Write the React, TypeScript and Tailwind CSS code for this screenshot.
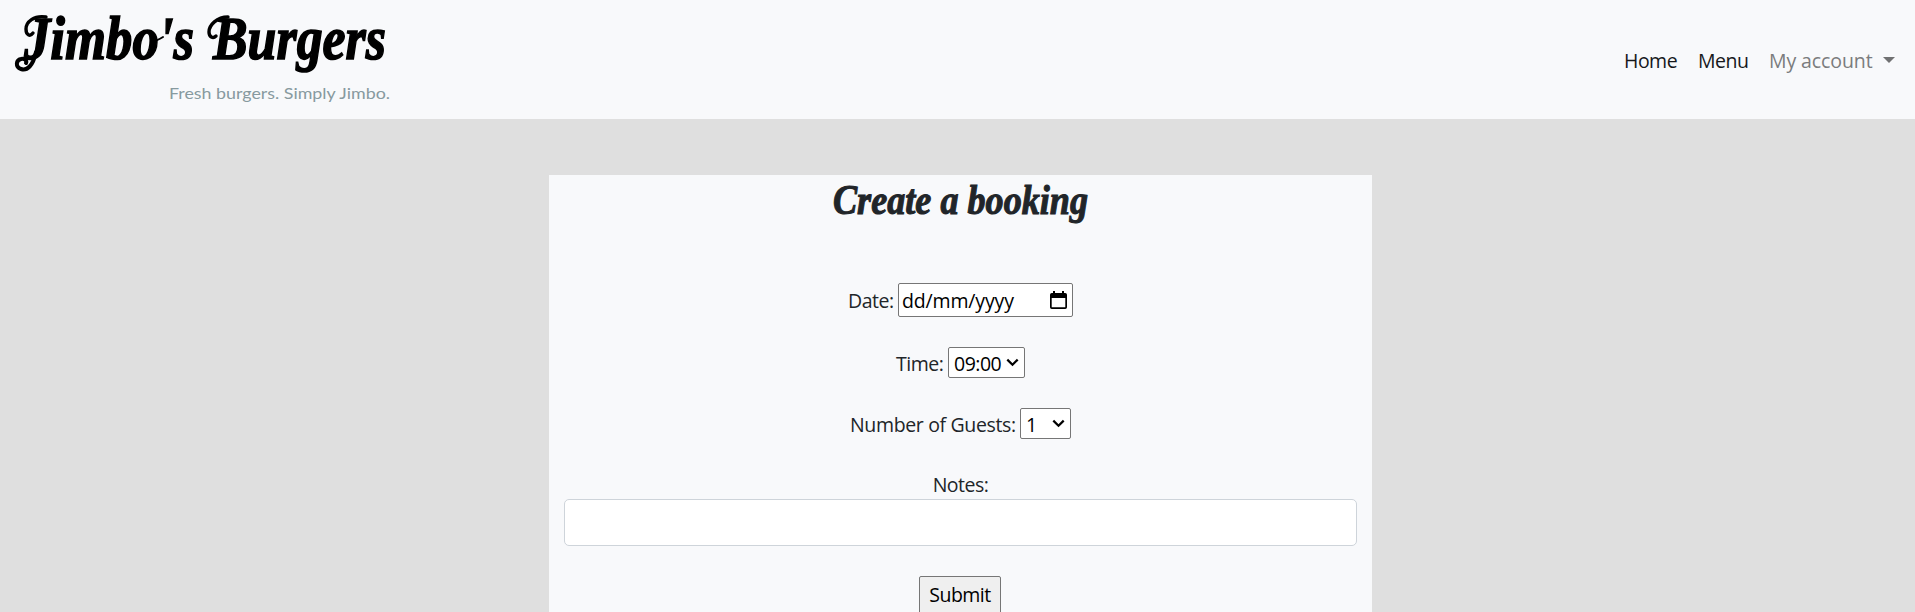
import type { ReactNode } from 'react';

function Chevron() {
  return (
    <svg className="h-[9px] w-[13px] shrink-0" viewBox="0 0 13 9" fill="none" stroke="#000" strokeWidth="2.2">
      <path d="M1.3 1.6 6.5 6.8l5.2-5.2" />
    </svg>
  );
}

function CalendarIcon() {
  return (
    <svg className="h-[18px] w-[17px] shrink-0" viewBox="0 0 17 18">
      <path
        fillRule="evenodd"
        d="M3 0h2v2h7V0h2v2h1.2Q17 2 17 3.8v12.4Q17 18 15.200 18H1.800Q0 18 0 16.200V3.800Q0 2 1.800 2H3zM1.700 7v9.300h13.600V7z"
      />
    </svg>
  );
}

function Row({ label, labelClass, children }: { label: string; labelClass: string; children: ReactNode }) {
  return (
    <div className="flex items-center justify-center">
      <label className={`mr-[4px] h-[30px] whitespace-nowrap pt-px text-left ${labelClass}`}>{label}</label>
      {children}
    </div>
  );
}

function Logo() {
  return (
    <svg className="h-[119px] w-[420px] overflow-visible" viewBox="0 0 420 119" role="img" aria-label="Jimbo's Burgers">
      <g fontSize="62" fontWeight="700" fontStyle="italic" fontFamily="Liberation Serif, serif" stroke="#000" strokeWidth="1.6" letterSpacing="0">
        <text x="24" y="59" textLength="170" lengthAdjust="spacingAndGlyphs">
          Jimbo&apos;s
        </text>
        <text x="213" y="59" textLength="173" lengthAdjust="spacingAndGlyphs">
          Burgers
        </text>
      </g>
      <g fill="none" stroke="#000" strokeWidth="3.4" strokeLinecap="round">
        <path d="M46 17C34 15 26 22 26 29c0 6 4 8 7 4" />
        <path d="M36 52C33 66 27 71 21 69c-6-2-5-9 0-10 4-1 6 2 5 4" strokeWidth="4" />
        <path d="M228 17c-11 0-19 8-19 15 0 5 4 7 7 4" />
        <path d="M151 41c5 0 9-2 12-4" strokeWidth="2" />
      </g>
      <text x="169" y="99" textLength="221" lengthAdjust="spacingAndGlyphs" fontSize="16" fontWeight="400" fontFamily="Lato, sans-serif" letterSpacing="0" fill="#879a9f">
        Fresh burgers. Simply Jimbo.
      </text>
    </svg>
  );
}

export default function App() {
  return (
    <div className="h-[612px] w-[1915px] overflow-hidden bg-[#dfdfdf] font-['Open_Sans','Noto_Sans',sans-serif] text-[19.5px] font-normal leading-[30px] tracking-[-0.5px] text-[#212529]">
      <header className="flex h-[119px] items-center justify-between bg-[#f8f9fb]">
        <Logo />
        <nav className="flex items-center pr-[20px]">
          <a className="mr-[20px] h-[30px] w-[54px] whitespace-nowrap pt-px text-[#16181b]">Home</a>
          <a className="mr-[20px] h-[30px] w-[51px] whitespace-nowrap pt-px text-[#16181b]">Menu</a>
          <a className="h-[30px] w-[105px] whitespace-nowrap pt-px tracking-[-0.1px] text-[#7b7c7d]">My account</a>
          <svg className="ml-[9px] h-[6px] w-[12px]" viewBox="0 0 12 6" fill="#707172">
            <path d="M0 0h12L6 6z" />
          </svg>
        </nav>
      </header>
      <main className="ml-[549px] mt-[56px] flex h-[500px] w-[823px] flex-col bg-[#f8f9fb] px-[15px]">
        <h1 className="flex h-[50px] justify-center">
          <svg className="h-[50px] w-[280px] overflow-visible" viewBox="0 0 280 50" fill="#212529">
            <text x="12" y="39" textLength="255" lengthAdjust="spacingAndGlyphs" fontSize="42" fontWeight="700" fontStyle="italic" letterSpacing="0" fontFamily="Liberation Serif, serif" stroke="#212529" strokeWidth="1.1">
              Create a booking
            </text>
          </svg>
        </h1>
        <form className="mt-[58px] flex flex-col text-center">
          <Row label="Date:" labelClass="w-[46px]">
            <div className="flex h-[34px] w-[175px] items-center justify-between rounded-[2px] border border-[#767676] bg-white pl-[3px] pr-[5px] text-black">
              <span className="h-[30px] pt-px tracking-[-0.15px]">dd/mm/yyyy</span>
              <CalendarIcon />
            </div>
          </Row>
          <div className="h-[30px]" />
          <Row label="Time:" labelClass="w-[48px]">
            <div className="flex h-[31px] w-[77px] items-center justify-between rounded-[2px] border border-[#767676] bg-white pl-[5px] pr-[5px] text-black">
              <span className="h-[30px] pt-px">09:00</span>
              <Chevron />
            </div>
          </Row>
          <div className="h-[30px]" />
          <Row label="Number of Guests:" labelClass="w-[166px] tracking-[-0.35px]">
            <div className="flex h-[31px] w-[51px] items-center justify-between rounded-[2px] border border-[#767676] bg-white pl-[5px] pr-[5px] text-black">
              <span className="h-[30px] pt-px">1</span>
              <Chevron />
            </div>
          </Row>
          <label className="mt-[30px] h-[30px] pt-px">Notes:</label>
          <input className="h-[47px] w-full rounded-[5px] border border-[#ced4da] bg-white px-3 outline-none" />
          <button type="button" className="ml-[355px] mt-[30px] h-[38px] w-[82px] rounded-[2px] border border-[#767676] bg-[#efefef] text-black">
            Submit
          </button>
        </form>
      </main>
    </div>
  );
}
